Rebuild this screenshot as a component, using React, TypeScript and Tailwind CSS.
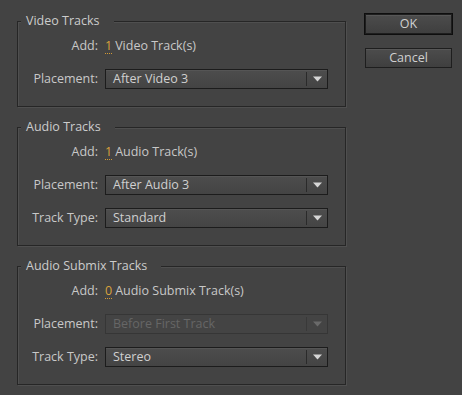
import React from "react";

type Row =
  | { kind: "add"; count: string; text: string }
  | { kind: "select"; label: string; value: string; disabled?: boolean };

const groups: { title: string; rows: Row[] }[] = [
  {
    title: "Video Tracks",
    rows: [
      { kind: "add", count: "1", text: "Video Track(s)" },
      { kind: "select", label: "Placement:", value: "After Video 3" },
    ],
  },
  {
    title: "Audio Tracks",
    rows: [
      { kind: "add", count: "1", text: "Audio Track(s)" },
      { kind: "select", label: "Placement:", value: "After Audio 3" },
      { kind: "select", label: "Track Type:", value: "Standard" },
    ],
  },
  {
    title: "Audio Submix Tracks",
    rows: [
      { kind: "add", count: "0", text: "Audio Submix Track(s)" },
      { kind: "select", label: "Placement:", value: "Before First Track", disabled: true },
      { kind: "select", label: "Track Type:", value: "Stereo" },
    ],
  },
];

const Dropdown = ({ value, disabled }: { value: string; disabled?: boolean }) => (
  <div
    className={
      disabled
        ? "flex h-[20px] w-[223px] items-stretch border border-[#363636] bg-[#444444]"
        : "flex h-[20px] w-[223px] items-stretch border border-[#1c1c1c] bg-gradient-to-b from-[#4d4d4d] to-[#444444] shadow-[inset_0_1px_0_#555555]"
    }
  >
    <div
      className={
        "flex flex-1 items-center pl-[7px] " +
        (disabled ? "text-[#666666]" : "text-[#d0d0d0]")
      }
    >
      {value}
    </div>
    <div
      className={
        "my-[2px] w-px " + (disabled ? "bg-[#393939]" : "bg-[#2a2a2a]")
      }
    />
    <div className="flex w-[20px] items-center justify-center">
      <svg width="9" height="6" viewBox="0 0 9 6">
        <path d="M0 0.5 H9 L4.5 5.5 Z" fill={disabled ? "#6a6a6a" : "#d6d6d6"} />
      </svg>
    </div>
  </div>
);

const Button = ({ label, primary }: { label: string; primary?: boolean }) => (
  <div className={primary ? "border border-[#0e0e0e] bg-[#0e0e0e]" : "mx-px"}>
    <div className="flex h-[20px] w-[87px] items-center justify-center border border-[#1e1e1e] bg-gradient-to-b from-[#4c4c4c] to-[#3f3f3f] text-[#d0d0d0] shadow-[inset_0_1px_0_#575757]">
      {label}
    </div>
  </div>
);

export default function App() {
  return (
    <div
      className="flex h-[395px] w-[462px] bg-[#434343] text-[12.5px] leading-[16px] text-[#c8c8c8]"
      style={{ fontFamily: '"Open Sans", "Noto Sans", sans-serif' }}
    >
      <div className="ml-[17px] mt-[21px] flex w-[329px] flex-col gap-[20px]">
        {groups.map((g) => (
          <div
            key={g.title}
            className="relative border border-[#262626] pb-[17px] pt-[14px] shadow-[1px_1px_0_#4f4f4f,inset_1px_1px_0_#4f4f4f]"
          >
            <div className="absolute left-[3px] top-[-9px] bg-[#434343] pl-[5px] pr-[14px] text-[#cccccc]">
              {g.title}
            </div>
            <div className="flex flex-col gap-[13px]">
              {g.rows.map((r, i) => (
                <div key={i} className="flex h-[20px] items-center gap-[7px]">
                  <div className="w-[80px] text-right">
                    {r.kind === "add" ? "Add:" : r.label}
                  </div>
                  {r.kind === "add" ? (
                    <div className="flex items-center">
                      <span className="border-b border-dotted border-[#d39a34] leading-[14px] text-[#d9a23c]">
                        {r.count}
                      </span>
                      <span className="ml-[3px]">{r.text}</span>
                    </div>
                  ) : (
                    <Dropdown value={r.value} disabled={r.disabled} />
                  )}
                </div>
              ))}
            </div>
          </div>
        ))}
      </div>
      <div className="ml-[18px] mt-[13px] flex flex-col items-start gap-[13px]">
        <Button label="OK" primary />
        <Button label="Cancel" />
      </div>
    </div>
  );
}
